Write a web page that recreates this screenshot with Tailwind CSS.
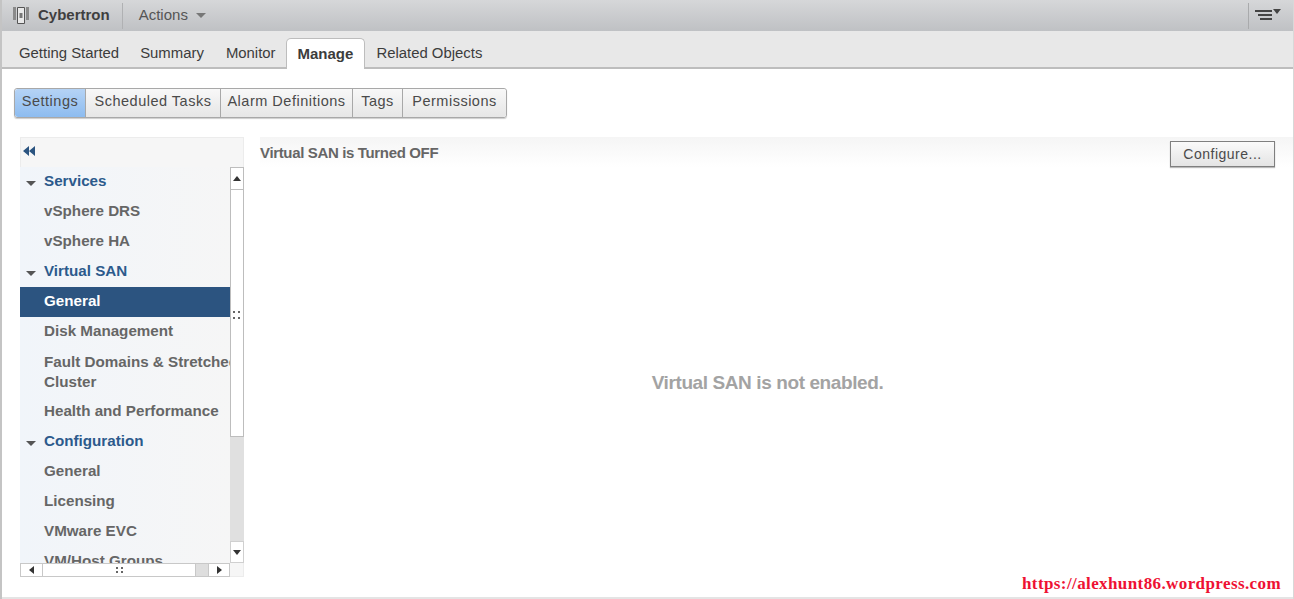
<!DOCTYPE html>
<html lang="en">
<head>
    <meta charset="UTF-8">
    <title>Cybertron - Manage</title>
    <script src="https://cdn.jsdelivr.net/npm/@tailwindcss/browser@4"></script>
</head>
<body class="bg-white">
    <div class="relative w-[1294px] h-[599px] overflow-hidden flex flex-col border-l-2 border-r border-l-[#c4c4c4] border-r-[#d8d8d8] font-['Liberation_Sans',sans-serif] text-[14px] text-[#4a4a4a]">
        <!-- Object header -->
        <div class="h-[31px] flex items-center bg-gradient-to-b from-[#d6d7d9] to-[#bfc1c4] shrink-0">
            <svg class="ml-[10px] w-[18px] h-[20px] mb-[2px]" viewBox="0 0 18 20">
                <path d="M1 2h3v13H1zM14 2h3v13h-3z" fill="#8a8a8a"/>
                <path d="M5.5 2.5h7v16h-7z" fill="#e8e8e8" stroke="#555"/>
                <path d="M7.5 8h3v5h-3z" fill="#777"/>
            </svg>
            <span class="ml-[8px] font-bold text-[15px] text-[#3f3f3f]">Cybertron</span>
            <div class="ml-[12px] w-px h-[26px] bg-[#b0b1b3]"></div>
            <span class="ml-[16px] text-[15px] text-[#555]">Actions</span>
            <div class="ml-[8px] w-0 h-0 border-x-[5px] border-x-transparent border-t-[5px] border-t-[#777]"></div>
            <div class="ml-auto w-px h-[26px] bg-[#a9aaac]"></div>
            <svg class="ml-[6px] mr-[12px] w-[26px] h-[12px] mb-[2px]" viewBox="0 0 26 12">
                <path d="M0 1h17v2H0zM3 5h14v2H3zM5 9h12v2H5z" fill="#444"/>
                <path d="M18 0h8l-4 5z" fill="#444"/>
            </svg>
        </div>

        <!-- Tabs -->
        <div class="h-[38px] flex items-end bg-[#e8e8e8] border-b-2 border-[#bdbdbd] shrink-0 pl-[7px] text-[14.9px] text-[#3c3c3c]">
            <div class="h-[31px] -mb-[2px] flex items-center pl-[10px] pr-[10px]">Getting Started</div>
            <div class="h-[31px] -mb-[2px] flex items-center px-[11px]">Summary</div>
            <div class="h-[31px] -mb-[2px] flex items-center pl-[11px] pr-[10px]">Monitor</div>
            <div class="h-[31px] -mb-[2px] flex items-center px-[11px] bg-white border border-b-0 border-[#bdbdbd] rounded-t-[5px] font-bold text-[15px]">Manage</div>
            <div class="h-[31px] -mb-[2px] flex items-center px-[11px]">Related Objects</div>
        </div>

        <!-- Sub tabs -->
        <div class="flex mt-[19px] ml-[12px] h-[30px] w-fit border border-[#a8a8a8] rounded-[3px] shadow-[0_1px_1px_#ccc] shrink-0 text-[14.5px] tracking-[0.5px]">
            <div class="w-[71px] pb-[2px] flex items-center justify-center bg-gradient-to-b from-[#b5d3f5] to-[#8dbcf0] rounded-l-[3px] border-r border-[#a8a8a8]">Settings</div>
            <div class="w-[135px] pb-[2px] flex items-center justify-center bg-gradient-to-b from-[#f8f8f8] to-[#e6e6e6] border-r border-[#a8a8a8]">Scheduled Tasks</div>
            <div class="w-[132px] pb-[2px] flex items-center justify-center bg-gradient-to-b from-[#f8f8f8] to-[#e6e6e6] border-r border-[#a8a8a8]">Alarm Definitions</div>
            <div class="w-[50px] pb-[2px] flex items-center justify-center bg-gradient-to-b from-[#f8f8f8] to-[#e6e6e6] border-r border-[#a8a8a8]">Tags</div>
            <div class="w-[103px] pb-[2px] flex items-center justify-center bg-gradient-to-b from-[#f8f8f8] to-[#e6e6e6] rounded-r-[3px]">Permissions</div>
        </div>

        <div class="flex mt-[19px] ml-[18px]">
            <!-- Left nav -->
            <div class="w-[224px] h-[440px] bg-[#f6f6f6] ring-1 ring-inset ring-[#ececec] flex flex-col shrink-0 font-bold text-[15.2px] text-[#666]">
                <div class="h-[30px] flex items-center pl-[3px] pb-[2px] shrink-0">
                    <svg class="w-[12px] h-[10px]" viewBox="0 0 12 10"><path d="M6 0v10L0 5zM12 0v10L6 5z" fill="#2b5480"/></svg>
                </div>
                <div class="flex h-[396px]">
                    <div class="w-[210px] overflow-hidden bg-gradient-to-r from-[#f1f5fa] to-[#f6f6f6]">
                        <div class="h-[30px] pb-[2px] flex items-center text-[#2c5a8c]"><span class="ml-[6px] mr-[8px] mt-[5px] w-0 h-0 border-x-[5px] border-x-transparent border-t-[5px] border-t-[#555]"></span>Services</div>
                        <div class="h-[30px] pb-[2px] flex items-center pl-[24px]">vSphere DRS</div>
                        <div class="h-[30px] pb-[2px] flex items-center pl-[24px]">vSphere HA</div>
                        <div class="h-[30px] pb-[2px] flex items-center text-[#2c5a8c]"><span class="ml-[6px] mr-[8px] mt-[5px] w-0 h-0 border-x-[5px] border-x-transparent border-t-[5px] border-t-[#555]"></span>Virtual SAN</div>
                        <div class="h-[30px] pb-[2px] flex items-center pl-[24px] bg-[#2c5480] text-white">General</div>
                        <div class="h-[30px] pb-[2px] flex items-center pl-[24px]">Disk Management</div>
                        <div class="h-[50px] pl-[24px] pt-[5px] leading-[20px] whitespace-nowrap">Fault Domains &amp; Stretched<br>Cluster</div>
                        <div class="h-[30px] pb-[2px] flex items-center pl-[24px]">Health and Performance</div>
                        <div class="h-[30px] pb-[2px] flex items-center text-[#2c5a8c]"><span class="ml-[6px] mr-[8px] mt-[5px] w-0 h-0 border-x-[5px] border-x-transparent border-t-[5px] border-t-[#555]"></span>Configuration</div>
                        <div class="h-[30px] pb-[2px] flex items-center pl-[24px]">General</div>
                        <div class="h-[30px] pb-[2px] flex items-center pl-[24px]">Licensing</div>
                        <div class="h-[30px] pb-[2px] flex items-center pl-[24px]">VMware EVC</div>
                        <div class="h-[30px] pb-[2px] flex items-center pl-[24px]">VM/Host Groups</div>
                    </div>
                    <!-- Vertical scrollbar -->
                    <div class="relative w-[14px] bg-[#e0e0e0] flex flex-col">
                        <div class="h-[23px] bg-white border border-[#bdbdbd] flex items-center justify-center">
                            <span class="w-0 h-0 border-x-[4px] border-x-transparent border-b-[5px] border-b-[#333]"></span>
                        </div>
                        <div class="h-[247px] bg-white border-x border-b border-[#bdbdbd]"></div>
                        <div class="flex-1"></div>
                        <div class="h-[22px] bg-white border border-[#d0d0d0] flex items-center justify-center">
                            <span class="w-0 h-0 border-x-[4px] border-x-transparent border-t-[5px] border-t-[#333]"></span>
                        </div>
                        <div class="absolute left-[3px] top-[144px] grid grid-cols-2 gap-x-[3px] gap-y-[4px]">
                            <span class="w-[2px] h-[2px] bg-[#666]"></span><span class="w-[2px] h-[2px] bg-[#666]"></span>
                            <span class="w-[2px] h-[2px] bg-[#666]"></span><span class="w-[2px] h-[2px] bg-[#666]"></span>
                        </div>
                    </div>
                </div>
                <!-- Horizontal scrollbar -->
                <div class="flex h-[14px] w-[210px] bg-[#dedede] border border-[#c8c8c8]">
                    <div class="w-[22px] bg-white border-r border-[#c8c8c8] flex items-center justify-center">
                        <span class="w-0 h-0 border-y-[4px] border-y-transparent border-r-[5px] border-r-[#333]"></span>
                    </div>
                    <div class="w-[153px] bg-white border-r border-[#c8c8c8] flex items-center justify-center">
                        <div class="grid grid-cols-2 gap-x-[3px] gap-y-[2px]">
                            <span class="w-[2px] h-[2px] bg-[#666]"></span><span class="w-[2px] h-[2px] bg-[#666]"></span>
                            <span class="w-[2px] h-[2px] bg-[#666]"></span><span class="w-[2px] h-[2px] bg-[#666]"></span>
                        </div>
                    </div>
                    <div class="flex-1"></div>
                    <div class="w-[21px] bg-white border-l border-[#c8c8c8] flex items-center justify-center">
                        <span class="w-0 h-0 border-y-[4px] border-y-transparent border-l-[5px] border-l-[#333]"></span>
                    </div>
                </div>
            </div>

            <!-- Main panel -->
            <div class="ml-[16px] w-[1034px] flex flex-col">
                <div class="h-[30px] flex items-start justify-between bg-gradient-to-b from-[#f5f5f5] to-white pr-[18px]">
                    <span class="font-bold text-[15px] text-[#666] mt-[5px] tracking-[-0.35px]">Virtual SAN is Turned OFF</span>
                    <div class="mt-[4px] w-[105px] h-[26px] flex items-center justify-center border border-[#7f7f7f] bg-gradient-to-b from-[#fafafa] to-[#e4e4e4] shadow-[0_1px_1px_#bbb] tracking-[0.5px]">Configure...</div>
                </div>
                <div class="h-[410px] pt-[202px] pr-[18px] text-center font-bold text-[19px] text-[#a3a3a3] tracking-[-0.4px]">Virtual SAN is not enabled.</div>
            </div>
        </div>

        <!-- Watermark and page bottom edge -->
        <div class="absolute right-[12px] top-[571px] font-['Liberation_Serif',serif] font-bold text-[17px] text-[#ee1133] tracking-[0.4px]">https://alexhunt86.wordpress.com</div>
        <div class="absolute left-0 right-0 bottom-0 h-[2px] bg-[#e4e4e4]"></div>
    </div>
</body>
</html>
